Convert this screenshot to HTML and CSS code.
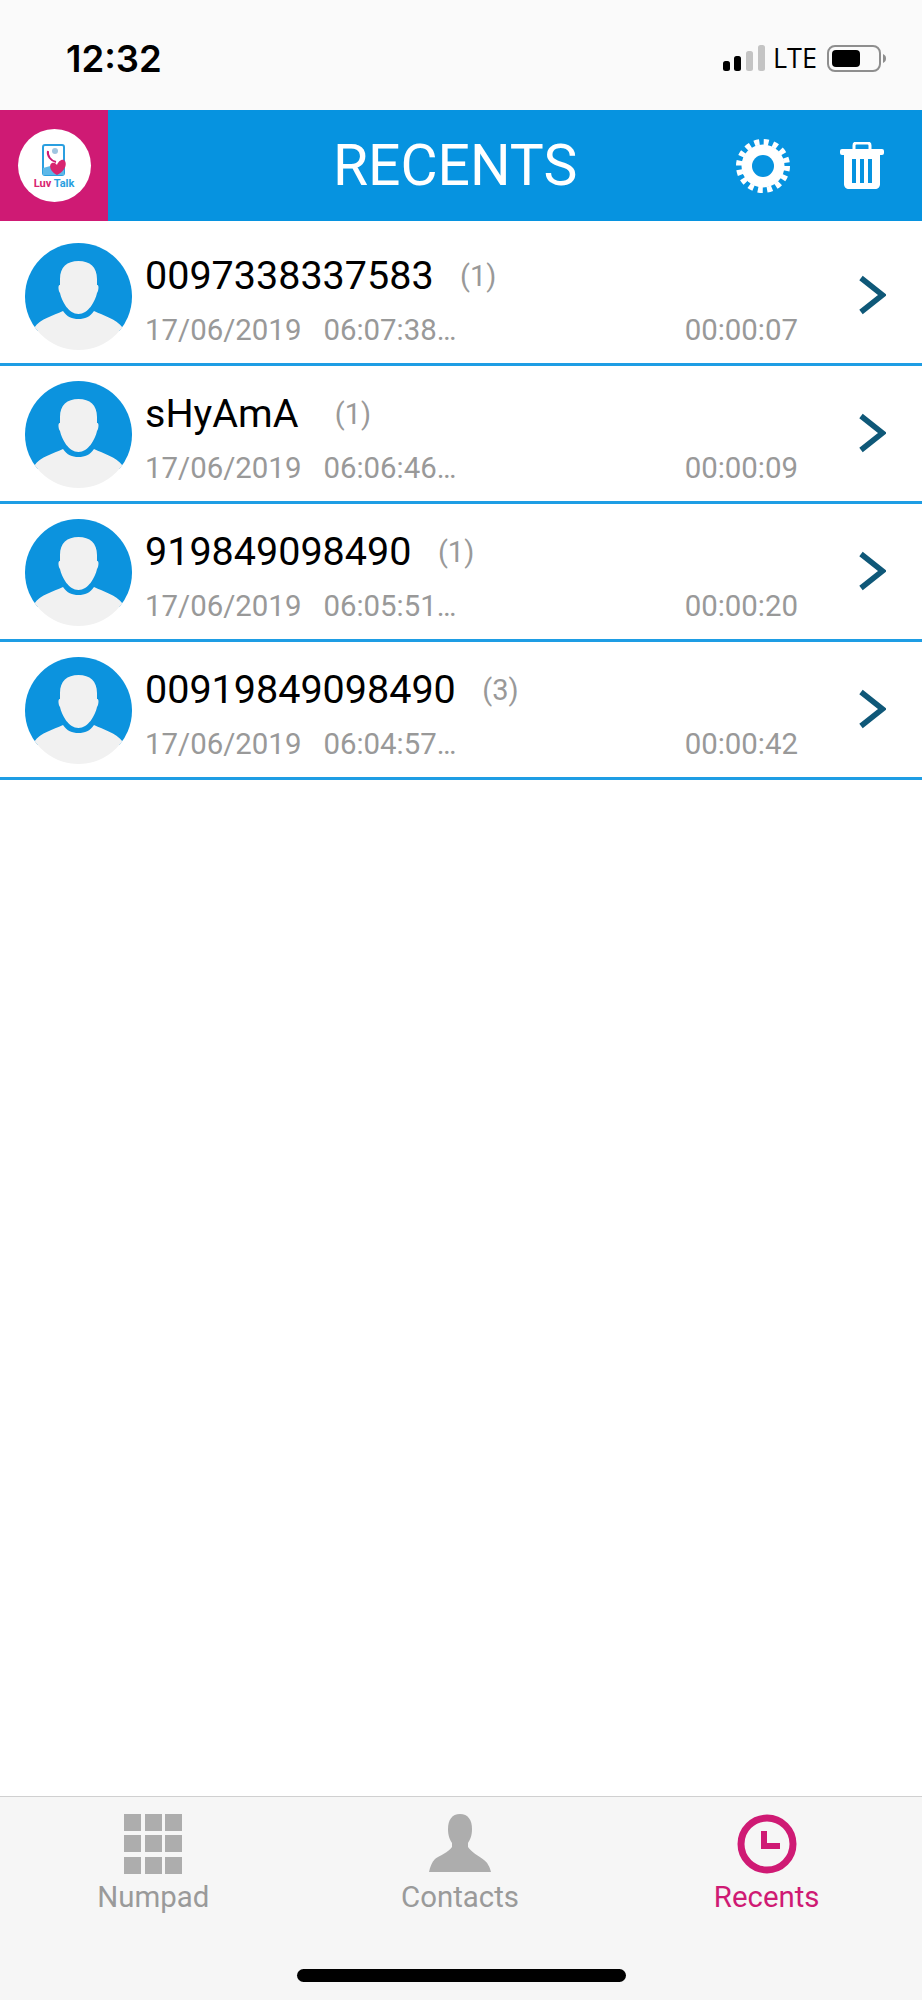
FILE: index.html
```html
<!DOCTYPE html>
<html lang="en">
<head>
<meta charset="utf-8">
<title>Recents</title>
<link rel="stylesheet" href="styles.css">
</head>
<body>
<svg class="defs" width="0" height="0" aria-hidden="true">
  <defs>
    <clipPath id="avatar-clip"><circle cx="53.5" cy="53.5" r="53.5"/></clipPath>
    <clipPath id="avatar-top"><rect x="0" y="0" width="107" height="88"/></clipPath>
    <symbol id="avatar" viewBox="0 0 107 107">
      <circle cx="53.5" cy="53.5" r="53.5" fill="#0c93de" clip-path="url(#avatar-top)"/>
      <g clip-path="url(#avatar-clip)" fill="#f1f1f1">
        <path d="M53.5 18C42 18 35 24 35 36V42C33 41 33 47 35 50C37 59 44 71 53.5 71C63 71 70 59 72 50C74 47 74 41 72 42V36C72 24 65 18 53.5 18Z"/>
        <path d="M9 85C16 75 28 73 38 68C42 74 47 76 53.5 76C60 76 65 74 69 68C79 73 90 75 98 85L107 107H0Z"/>
      </g>
    </symbol>
    <symbol id="chevron" viewBox="0 0 27 40">
      <path d="M2 3L23.500 20L2 37" fill="none" stroke="#0f5878" stroke-width="5.500"/>
    </symbol>
  </defs>
</svg>
<div class="screen">
  <div class="status">
    <span class="clock-text">12:32</span>
    <div class="status-right">
      <svg class="signal" width="42" height="26" viewBox="0 0 42 26">
        <rect x="0" y="16" width="7" height="10" rx="2.500" fill="#000"/>
        <rect x="11" y="11" width="7" height="15" rx="2.500" fill="#000"/>
        <rect x="23" y="6" width="7" height="20" rx="2.500" fill="#c4c4c4"/>
        <rect x="35" y="0" width="7" height="26" rx="2.500" fill="#c4c4c4"/>
      </svg>
      <span class="lte">LTE</span>
      <svg class="battery" width="60" height="28" viewBox="0 0 60 28">
        <rect x="1" y="1" width="52" height="25" rx="7" fill="none" stroke="#8e8e8e" stroke-width="2"/>
        <rect x="5" y="5" width="28" height="17" rx="4" fill="#000"/>
        <path d="M56 9C58.500 10 59 12 59 13.500C59 15 58.500 17 56 18Z" fill="#8e8e8e"/>
      </svg>
    </div>
  </div>

  <header class="header">
    <div class="logo-box">
      <div class="logo">
        <svg class="logo-mark" width="24" height="33" viewBox="0 0 24 33">
          <rect x="1" y="1" width="21" height="30" rx="2" fill="#fff" stroke="#2a9fe0" stroke-width="2"/>
          <path d="M1 24L12 21L22 26V31H1Z" fill="#5db8e8"/>
          <path d="M6 7C5 12 9 17 14 18" fill="none" stroke="#cf1a74" stroke-width="2"/>
          <circle cx="13" cy="7" r="3" fill="#9fc5e0"/>
          <path d="M15 31C7 27 7 20 10 19C13 18 14 20 15 21C16 18 19 15 22 16C25 18 25 26 15 31Z" fill="#d8246f"/>
        </svg>
        <span class="logo-text"><span class="logo-pink">Luv</span> <span class="logo-blue">Talk</span></span>
      </div>
    </div>
    <h1 class="title">RECENTS</h1>
    <div class="actions">
      <svg class="gear" width="54" height="54" viewBox="0 0 54 54">
        <circle cx="27" cy="27" r="21.500" fill="#fff"/>
        <circle cx="27" cy="27" r="24" fill="none" stroke="#fff" stroke-width="6" stroke-dasharray="5 4.425"/>
        <circle cx="27" cy="27" r="11" fill="#0693e0"/>
      </svg>
      <svg class="trash" width="44" height="47" viewBox="0 0 44 47">
        <path d="M14 7V3.500C14 2 15 1 16.500 1H27.500C29 1 30 2 30 3.500V7" fill="none" stroke="#fff" stroke-width="3"/>
        <rect x="0" y="7" width="44" height="6" rx="2" fill="#fff"/>
        <path d="M4 13H40V42C40 45 38 47 35 47H9C6 47 4 45 4 42Z" fill="#fff"/>
        <rect x="12" y="17" width="4" height="24" fill="#0693e0"/>
        <rect x="20" y="17" width="4" height="24" fill="#0693e0"/>
        <rect x="28" y="17" width="4" height="24" fill="#0693e0"/>
      </svg>
    </div>
  </header>

  <main class="list">
    <div class="row">
      <svg class="avatar"><use href="#avatar"/></svg>
      <div class="info">
        <div class="line-name"><span class="name">0097338337583</span><span class="count">(1)</span></div>
        <div class="line-meta"><span>17/06/2019</span><span class="time">06:07:38…</span><span class="duration">00:00:07</span></div>
      </div>
      <svg class="chevron"><use href="#chevron"/></svg>
    </div>
    <div class="row">
      <svg class="avatar"><use href="#avatar"/></svg>
      <div class="info">
        <div class="line-name"><span class="name">sHyAmA </span><span class="count">(1)</span></div>
        <div class="line-meta"><span>17/06/2019</span><span class="time">06:06:46…</span><span class="duration">00:00:09</span></div>
      </div>
      <svg class="chevron"><use href="#chevron"/></svg>
    </div>
    <div class="row">
      <svg class="avatar"><use href="#avatar"/></svg>
      <div class="info">
        <div class="line-name"><span class="name">919849098490</span><span class="count">(1)</span></div>
        <div class="line-meta"><span>17/06/2019</span><span class="time">06:05:51…</span><span class="duration">00:00:20</span></div>
      </div>
      <svg class="chevron"><use href="#chevron"/></svg>
    </div>
    <div class="row">
      <svg class="avatar"><use href="#avatar"/></svg>
      <div class="info">
        <div class="line-name"><span class="name">00919849098490</span><span class="count">(3)</span></div>
        <div class="line-meta"><span>17/06/2019</span><span class="time">06:04:57…</span><span class="duration">00:00:42</span></div>
      </div>
      <svg class="chevron"><use href="#chevron"/></svg>
    </div>
  </main>

  <footer class="tabbar">
    <nav class="tabs">
      <div class="tab">
        <svg class="tab-icon" width="58" height="60" viewBox="0 0 58 60">
          <g fill="#adadad">
            <rect x="0" y="0" width="17" height="17"/><rect x="21" y="0" width="17" height="17"/><rect x="41" y="0" width="17" height="17"/>
            <rect x="0" y="21" width="17" height="17"/><rect x="21" y="21" width="17" height="17"/><rect x="41" y="21" width="17" height="17"/>
            <rect x="0" y="43" width="17" height="17"/><rect x="21" y="43" width="17" height="17"/><rect x="41" y="43" width="17" height="17"/>
          </g>
        </svg>
        <span>Numpad</span>
      </div>
      <div class="tab">
        <svg class="tab-icon" width="62" height="60" viewBox="0 0 62 60">
          <path d="M31 0C23 0 19 6 19 15C19 22 21 26 23 29V33C20 38 10 42 6 45C3 48 1 53 0 58H62C61 53 58 48 55 46C50 42 42 38 39 33V29C41 26 43 22 43 15C43 6 39 0 31 0Z" fill="#adadad"/>
        </svg>
        <span>Contacts</span>
      </div>
      <div class="tab tab-active">
        <svg class="tab-icon" width="60" height="60" viewBox="0 0 60 60">
          <circle cx="30" cy="30" r="26" fill="none" stroke="#cf1a74" stroke-width="7"/>
          <path d="M27 17V32H43" fill="none" stroke="#cf1a74" stroke-width="6"/>
        </svg>
        <span>Recents</span>
      </div>
    </nav>
    <div class="home-bar"></div>
  </footer>
</div>
</body>
</html>
```

FILE: styles.css
```css
* { box-sizing: border-box; }

html, body {
  margin: 0;
  padding: 0;
  background: #fff;
}

.defs { position: absolute; }

.screen {
  width: 922px;
  height: 2000px;
  display: flex;
  flex-direction: column;
  font-family: Roboto, "Liberation Sans", sans-serif;
}

/* status bar */
.status {
  height: 110px;
  flex: none;
  background: #fafafa;
  display: flex;
  justify-content: space-between;
  align-items: flex-start;
  padding: 37px 35px 0 66px;
}

.clock-text {
  font-family: Inter, Roboto, sans-serif;
  font-weight: 600;
  font-size: 36.5px;
  line-height: 44px;
  color: #000;
}

.status-right {
  display: flex;
  align-items: flex-start;
  padding-top: 8px;
}

.signal { display: block; }

.lte {
  font-family: "Open Sans", Roboto, sans-serif;
  font-size: 27px;
  line-height: 26px;
  color: #000;
  margin-left: 8px;
  margin-right: 10px;
}

.battery { display: block; }

/* header */
.header {
  height: 111px;
  flex: none;
  background: #0693e0;
  display: flex;
  align-items: center;
}

.logo-box {
  width: 108px;
  height: 100%;
  flex: none;
  background: #cf1a74;
  display: flex;
  align-items: center;
  justify-content: center;
}

.logo {
  width: 73px;
  height: 73px;
  border-radius: 50%;
  background: #fff;
  display: flex;
  flex-direction: column;
  align-items: center;
  padding-top: 15px;
}

.logo-mark { display: block; }

.logo-text {
  font-size: 11px;
  line-height: 12px;
  font-weight: 700;
  white-space: nowrap;
  margin-top: 1px;
}

.logo-pink { color: #d8246f; }
.logo-blue { color: #2a9fe0; }

.title {
  margin: 0 0 0 225px;
  font-size: 57px;
  line-height: 68px;
  font-weight: 400;
  color: #fff;
}

.actions {
  margin-left: auto;
  margin-right: 38px;
  display: flex;
  align-items: center;
  gap: 50px;
}

.gear, .trash { display: block; }

/* list */
.list {
  flex: 1;
  padding-top: 7px;
  background: #fff;
}

.row {
  height: 138px;
  display: flex;
  align-items: flex-start;
  padding: 15px 0 0 25px;
  border-bottom: 3px solid #1e9de4;
}

.avatar {
  width: 107px;
  height: 107px;
  flex: none;
}

.info {
  width: 653px;
  margin-left: 13px;
  padding-top: 10px;
}

.line-name {
  display: flex;
  align-items: center;
  height: 46px;
}

.name {
  font-size: 39.5px;
  line-height: 46px;
  color: #000;
  white-space: pre;
}

.count {
  font-size: 29px;
  line-height: 34px;
  color: #999;
  margin-left: 26.5px;
}

.line-meta {
  display: flex;
  margin-top: 14px;
  font-size: 29.4px;
  line-height: 34px;
  color: #999;
}

.time { margin-left: 22px; }

.duration { margin-left: auto; }

.chevron {
  width: 27px;
  height: 40px;
  flex: none;
  margin-left: 61px;
  margin-top: 32px;
}

/* tab bar */
.tabbar {
  height: 204px;
  flex: none;
  background: #f6f6f6;
  border-top: 1px solid #d0d0d0;
  display: flex;
  flex-direction: column;
  align-items: center;
}

.tabs {
  width: 100%;
  display: grid;
  grid-template-columns: repeat(3, 1fr);
  padding: 17px 2px 0 0;
}

.tab {
  display: flex;
  flex-direction: column;
  align-items: center;
  gap: 6px;
  font-size: 29.4px;
  line-height: 34px;
  color: #9a9a9a;
}

.tab-active { color: #cf1a74; }

.tab-icon { display: block; }

.home-bar {
  width: 329px;
  height: 13px;
  border-radius: 7px;
  background: #000;
  margin-top: 55px;
}
```
